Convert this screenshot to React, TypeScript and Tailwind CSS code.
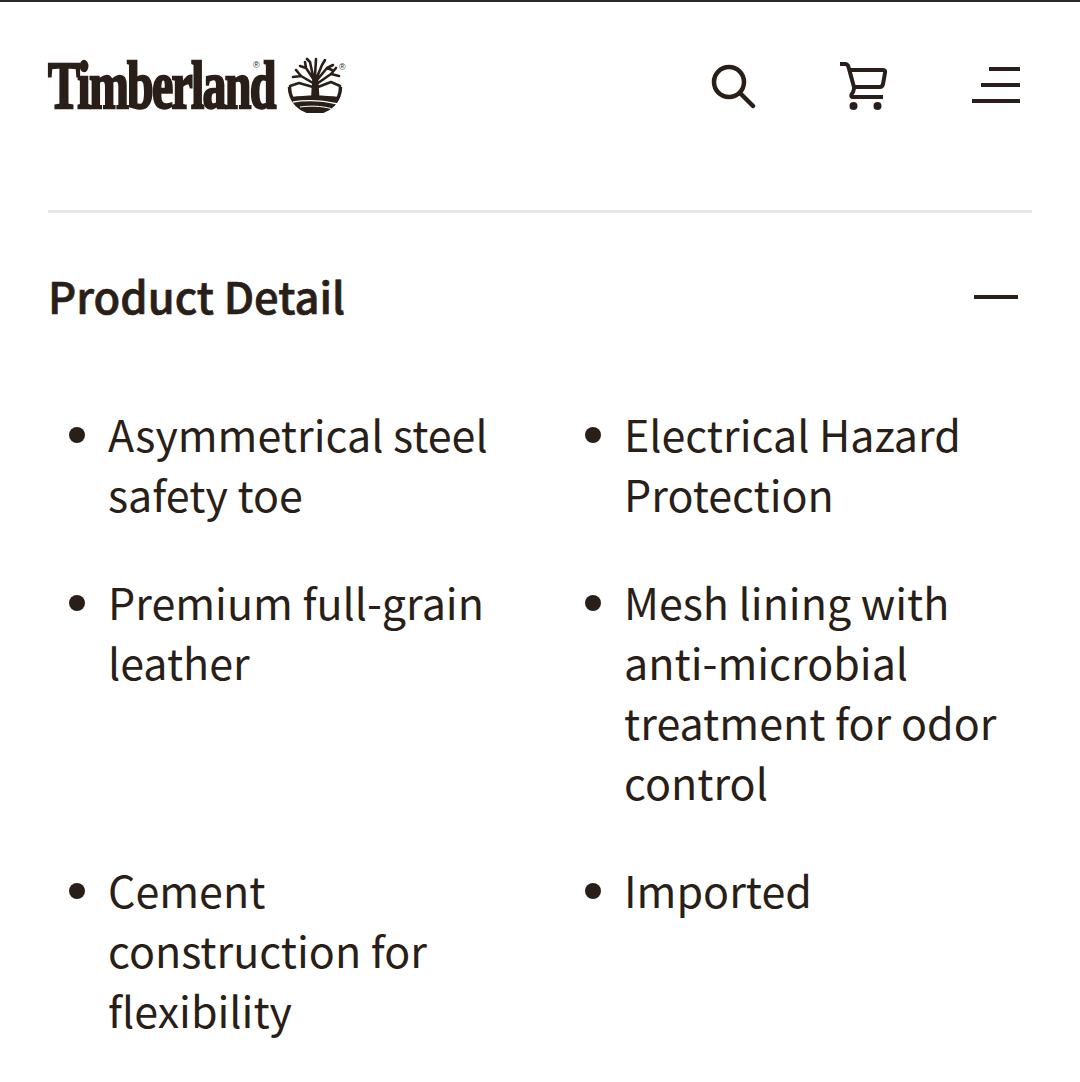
const items = [
  "Asymmetrical steel safety toe",
  "Electrical Hazard Protection",
  "Premium full-grain leather",
  "Mesh lining with anti-microbial treatment for odor control",
  "Cement construction for flexibility",
  "Imported",
];

const ink = "#2a1f18";

function Tree() {
  return (
    <svg width="56" height="56" viewBox="0 0 56 56" className="shrink-0" fill="none">
      <path d="M2.500 30 A25.500 25.500 0 0 0 53.500 30" stroke={ink} strokeWidth="3.500" />
      <path d="M4.500 40 C18 38 38 38 51.500 40 A26 26 0 0 1 4.500 40 Z" fill={ink} />
      <path d="M6 45 C20 42.500 36 43.500 51 47" stroke="#fff" strokeWidth="1.300" />
      <path d="M13 50 C24 48.500 34 49 44 51.500" stroke="#fff" strokeWidth="1" />
      <path d="M24 41 L25.500 18 L31 18 L32.500 41 Z" fill={ink} />
      <g stroke={ink} strokeLinecap="round" strokeLinejoin="round">
        <path d="M27 23 L19 11 L13 9 M19 11 L18 5 M26 19 L23 5 L20 2 M28 19 L29 2 M30 20 L35 8 L38 3 M30 23 L40 11 L46 8 M40 11 L45 13" strokeWidth="2.600" />
        <path d="M26 26 L14 19 L6 20 M14 19 L9 13 M31 26 L44 17 L52 19 M44 17 L49 11 M26 30 L12 26 L3 29 M31 30 L44 25 L53 29" strokeWidth="2.600" />
      </g>
    </svg>
  );
}

function Logo() {
  return (
    <div className="flex items-start">
      <div className="relative h-[54px] w-[239px]">
        <span className="absolute left-0 top-[-8px] origin-top-left scale-x-[0.705] whitespace-nowrap font-['Liberation_Serif',serif] text-[68px] leading-[72px] font-bold tracking-[-2.500px] text-[#2a1f18] [-webkit-text-stroke:2.400px_#2a1f18]">
          Timberland
        </span>
        <span className="absolute left-[205px] top-[4px] font-['Liberation_Sans',sans-serif] text-[9px] leading-[9px] text-[#2a1f18]">®</span>
      </div>
      <Tree />
      <span className="-ml-[4px] mt-[6px] font-['Liberation_Sans',sans-serif] text-[9px] leading-[9px] text-[#2a1f18]">®</span>
    </div>
  );
}

export default function App() {
  return (
    <div className="h-[1082px] w-[1080px] overflow-hidden border-t-[2px] border-[#2b2b2b] bg-white px-[48px] font-['Noto_Sans_CJK_SC','Noto_Sans',sans-serif] text-[#2a1f18]">
      <header className="flex h-[167px] items-start justify-between pt-[55px] pr-[12px]">
        <Logo />
        <div className="-mt-[1px] flex items-start">
          <svg width="46" height="46" viewBox="0 0 46 46" fill="none" stroke={ink} strokeWidth="4.500" strokeLinecap="round" className="mt-[7px]">
            <circle cx="19" cy="19" r="15" />
            <path d="M30 30 L43 43" />
          </svg>
          <svg width="50" height="52" viewBox="0 0 50 52" fill="none" stroke={ink} strokeWidth="4" className="ml-[82px] mt-[4px]">
            <path d="M2 4 H7 C9 4 10 5 10.500 7 L16 27 C16.500 29 16 30 15 32 C13 35 12 37 16 37 H45" strokeLinejoin="round" />
            <path d="M12 10 H45 C47 10 47.500 11 47 13 L45 24 C44.500 26 43.500 27 42 27 H16" />
            <circle cx="15.500" cy="46" r="4" fill={ink} stroke="none" />
            <circle cx="39.500" cy="46" r="4" fill={ink} stroke="none" />
          </svg>
          <div className="ml-[84px] mt-[11px] flex w-[48px] flex-col items-end gap-[12px]">
            <div className="h-[4px] w-[31px] bg-[#2a1f18]" />
            <div className="h-[4px] w-[39px] bg-[#2a1f18]" />
            <div className="h-[4px] w-[48px] bg-[#2a1f18]" />
          </div>
        </div>
      </header>
      <div className="mt-[41px] h-[3px] bg-[#e6e6e6]" />
      <div className="mt-[53px] flex items-center justify-between">
        <h2 className="text-[43.500px] leading-[60px] font-medium [-webkit-text-stroke:0.7px_#2a1f18]">Product Detail</h2>
        <div className="mr-[14px] mt-[2px] h-[4px] w-[44px] bg-[#2a1f18]" />
      </div>
      <ul className="mt-[77px] grid grid-cols-[516px_1fr] gap-y-[48px]">
        {items.map((t) => (
          <li key={t} className="flex pl-[21px] odd:pr-[60px] even:pr-[20px] text-[43px] leading-[60px]">
            <span className="mt-[24px] mr-[23px] h-[16px] w-[16px] shrink-0 rounded-full bg-[#2a1f18]" />
            <span>{t}</span>
          </li>
        ))}
      </ul>
    </div>
  );
}
